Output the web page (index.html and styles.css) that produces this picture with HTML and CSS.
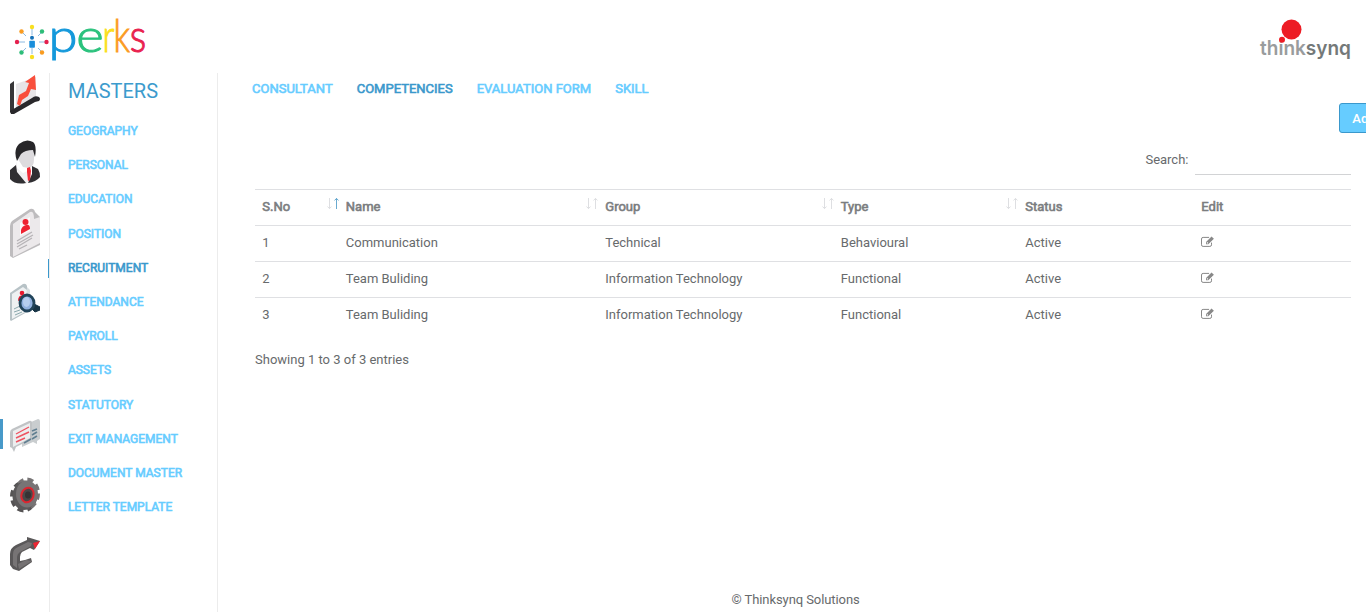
FILE: index.html
```html
<!DOCTYPE html>
<html lang="en">
<head>
<meta charset="utf-8">
<title>Masters - Competencies</title>
<link rel="stylesheet" href="styles.css">
</head>
<body>
<svg class="defs" width="0" height="0">
  <symbol id="edit" viewBox="0 0 13 11"><path d="M10.500 6.600v2.200a1.600 1.600 0 0 1-1.600 1.600H2.100A1.600 1.600 0 0 1 .5 8.800V3A1.600 1.600 0 0 1 2.100 1.400h6" fill="none" stroke="#888" stroke-width="1"/><path d="M5 8.200V6L10.500.4 12.900 2.700 7.300 8.200zM5.800 6.300V7.400H6.900L7.300 7 6.200 5.900z" fill="#888" fill-rule="evenodd"/></symbol>
  <symbol id="sort" viewBox="0 0 12 13"><path class="down" d="M2.500 1v10.500M.5 9.600 2.500 11.500l2-1.900"/><path class="up" d="M9.500 12V1.500M7.500 3.400l2-1.900 2 1.900"/></symbol>
</svg>
<header class="top">
  <svg class="logo" width="148" height="56" viewBox="0 10 148 56">
    <g stroke="#7fb2df" stroke-width=".9"><path d="M32 29v6M32 48v6M17 42h8M39 42h7M22 32l4 4M42 32l-4 4M22 52l4-4M42 52l-4-4"/></g>
    <circle cx="32" cy="27" r="2.200" fill="#f8df20"/><circle cx="42" cy="31.500" r="2.200" fill="#2dbd78"/><circle cx="46.500" cy="42" r="2.200" fill="#e5204e"/><circle cx="42" cy="52.500" r="2.200" fill="#f99b20"/><circle cx="32" cy="57" r="2.200" fill="#f8df20"/><circle cx="21.500" cy="52.500" r="2.200" fill="#2dbd78"/><circle cx="17" cy="42" r="2.200" fill="#e5204e"/><circle cx="21.500" cy="31.500" r="2.200" fill="#f99b20"/>
    <circle cx="32" cy="37.800" r="2" fill="#1672b8"/><rect x="29.300" y="40.800" width="5.600" height="7" rx=".8" fill="#198edb"/>
    <g class="perks">
      <text x="48.500" y="51.500" textLength="29" lengthAdjust="spacingAndGlyphs" fill="#1599db" stroke="#1599db">p</text>
      <text x="76.300" y="51.500" textLength="27.500" lengthAdjust="spacingAndGlyphs" fill="#2bc27d" stroke="#2bc27d">e</text>
      <text x="102.500" y="51.500" textLength="12" lengthAdjust="spacingAndGlyphs" fill="#fadf1c" stroke="#fadf1c">r</text>
      <text x="113.500" y="51.500" textLength="16.500" lengthAdjust="spacingAndGlyphs" fill="#fb9b22" stroke="#fb9b22">k</text>
      <text x="129.800" y="51.500" textLength="16.500" lengthAdjust="spacingAndGlyphs" fill="#e9224f" stroke="#e9224f">s</text>
    </g>
  </svg>
  <svg class="brand" width="94" height="48" viewBox="1258 15 94 48">
    <text class="syn" x="1260" y="54.500" textLength="91" lengthAdjust="spacingAndGlyphs"><tspan fill="#999c9d">think</tspan><tspan fill="#747979">synq</tspan></text>
    <circle cx="1291.500" cy="29.500" r="10" fill="#ed1c24"/><circle cx="1282" cy="39.800" r="3" fill="#ed1c24"/>
  </svg>
</header>
<div class="shell">
  <aside class="rail">
    <a class="r1"><svg width="30" height="41" viewBox="0 0 30 41"><path d="M6 9 26 2v21L6 34z" fill="#e7e5e7"/><path d="M0 9l4-3v28l-4 4z" fill="#373638"/><path d="M1 39 0 36l22-13q3-3 7-1 2 2 0 4l-4 1-21 12z" fill="#29282b"/><path d="M7 29 10 31 12 25 18 21 21 14 26 15 25 0 15 7l4 1-3 8-7 4z" fill="#f94f3c"/></svg></a>
    <a class="r2"><svg width="30" height="44" viewBox="0 0 30 44"><path d="M8 10h16v9q0 8-5 9l-6-1-5-8z" fill="#dddbde"/><path d="M7 21Q3 10 9 4q7-6 14-2 4 3 2 15l-2-7q-8 0-12 4z" fill="#272629"/><path d="M7 21v7l6 5 7-3 2 8-6 6-8-5-3-10z" fill="#f1f0f2"/><path d="M6 25 0 30v9q5 6 16 4L7 32zM22 26l6 3q2 3 2 8-4 5-12 6l4-9z" fill="#302f32"/><path d="M17 28l3-1 1 4-1 9-2 1-1-9z" fill="#f12a37"/></svg></a>
    <a class="r3"><svg width="30" height="50" viewBox="0 0 30 50"><path d="M2 13 20 1q4-1 5 3l5 5v28L3 50l-3-2V18q0-3 2-5z" fill="#bebcbe"/><path d="M3 16 20 4q4-2 4 7l6-2v26L3 49z" fill="#ece9eb"/><path d="M10 15 20 9v14L10 28z" fill="#fbf8f9"/><circle cx="15.500" cy="14" r="3" fill="#ee2231"/><path d="M11 26v-4q1-4 5-5 4-1 4 4z" fill="#ee2231"/><path d="M7 33l15-9M7 36l16-9M7 39l15-9M9 41l8-4" stroke="#b6b3b6" stroke-width="1.300"/></svg></a>
    <a class="r4"><svg width="30" height="38" viewBox="0 0 30 38"><path d="M0 10 13 1q3-1 4 2v26L1 38 0 37z" fill="#b7c2c6"/><path d="M2 11 13 4l4 3v21L2 36z" fill="#eef1f2"/><path d="M17 4l3 3v8h-4z" fill="#d9dfe1"/><circle cx="12" cy="10" r="2.300" fill="#e7182e"/><path d="M8 18q0-6 5-6 3 0 2 3z" fill="#e7182e"/><path d="M4 26l6-3M4 29l6-2M5 32l7-3" stroke="#8aa8ad"/><path d="M21 25l3-4 6 3v3l-5 2z" fill="#163344" stroke="#163344"/><ellipse cx="17" cy="20" rx="7" ry="8" fill="#91b1df" stroke="#21445a" stroke-width="2.800"/><ellipse cx="16.500" cy="19" rx="3.500" ry="5" fill="#b6ceef"/></svg></a>
    <a class="r5 on"><svg width="30" height="34" viewBox="0 0 30 34"><path d="M12 7 28 0q2 0 2 3v17l-3 2v3l-4-2-11 5z" fill="#c9cdcf"/><path d="M2 10 19 2q3-1 3 2v16L6 28l-2 5-2-4-2-1V14q0-3 2-4z" fill="#c0c3c5"/><path d="M3 12 20 4v15L3 28z" fill="#eceeef"/><path d="M6 15l13-7M6 19l13-6M6 23l9-4" stroke="#ee5361" stroke-width="1.400"/><path d="M22 12l5-2M22 16l5-3M22 20l5-3M14 24l7-4" stroke="#617f91" stroke-width="1.600"/></svg></a>
    <a class="r6"><svg width="30" height="36" viewBox="0 0 30 36"><g fill="none" stroke-width="4"><ellipse cx="13.500" cy="19.500" rx="11.500" ry="14" stroke="#555354" stroke-dasharray="6 4"/><ellipse cx="17" cy="16.500" rx="11" ry="14" stroke="#777475" stroke-dasharray="6 3.850"/></g><ellipse cx="14" cy="19" rx="11.500" ry="14" fill="#5b595a"/><ellipse cx="17" cy="17" rx="11" ry="13.500" fill="#777475"/><ellipse cx="17.500" cy="18" rx="6" ry="7.500" transform="rotate(20 17.500 18)" fill="#4a4748" stroke="#dc2630" stroke-width="2"/><ellipse cx="18" cy="18" rx="3" ry="3.500" fill="#353334"/></svg></a>
    <a class="r7"><svg width="30" height="34" viewBox="0 0 30 34"><path d="M0 17q0-6 6-9l11-5V0l13 4-6 9-4-2-8 4q-2 2-2 5v4l5-1 6-2 1 4L9 34 3 32 0 28z" fill="#5a5859"/><path d="M3 17q0-5 5-7l10-5 4 1-1 3-11 6q-3 2-3 6v10l-4-3z" fill="#777475"/><path d="M8 27l8-4 6 1-13 8z" fill="#757273"/><path d="M23 6l7-2-5 8z" fill="#ec2633"/></svg></a>
  </aside>
  <nav class="side">
    <h1>MASTERS</h1>
    <a>GEOGRAPHY</a><a>PERSONAL</a><a>EDUCATION</a><a>POSITION</a><a class="active">RECRUITMENT</a><a>ATTENDANCE</a><a>PAYROLL</a><a>ASSETS</a><a>STATUTORY</a><a>EXIT MANAGEMENT</a><a>DOCUMENT MASTER</a><a>LETTER TEMPLATE</a>
  </nav>
  <main>
    <nav class="tabs"><a>CONSULTANT</a><a class="active">COMPETENCIES</a><a>EVALUATION FORM</a><a>SKILL</a></nav>
    <div class="actions"><button>Add</button></div>
    <label class="search">Search:<input type="text"></label>
    <table>
      <colgroup><col class="c1"><col class="c2"><col class="c3"><col class="c4"><col class="c5"><col></colgroup>
      <thead><tr>
        <th><span>S.No<svg class="sort asc"><use href="#sort"/></svg></span></th>
        <th><span>Name<svg class="sort"><use href="#sort"/></svg></span></th>
        <th><span>Group<svg class="sort"><use href="#sort"/></svg></span></th>
        <th><span>Type<svg class="sort"><use href="#sort"/></svg></span></th>
        <th>Status</th><th>Edit</th>
      </tr></thead>
      <tbody>
        <tr><td>1</td><td>Communication</td><td>Technical</td><td>Behavioural</td><td>Active</td><td><svg class="edit"><use href="#edit"/></svg></td></tr>
        <tr><td>2</td><td>Team Buliding</td><td>Information Technology</td><td>Functional</td><td>Active</td><td><svg class="edit"><use href="#edit"/></svg></td></tr>
        <tr><td>3</td><td>Team Buliding</td><td>Information Technology</td><td>Functional</td><td>Active</td><td><svg class="edit"><use href="#edit"/></svg></td></tr>
      </tbody>
    </table>
    <p class="info">Showing 1 to 3 of 3 entries</p>
    <footer>© Thinksynq Solutions</footer>
  </main>
</div>
</body>
</html>
```
FILE: styles.css
```css
* { box-sizing: border-box; }
html, body { margin: 0; height: 612px; overflow: hidden; }
body { font: 13px/20px Roboto, sans-serif; color: #676a6c; background: #fff; }
.defs { display: block; }
.top { height: 73px; display: flex; justify-content: space-between; padding: 10px 14px 0 0; }
.logo { display: block; overflow: visible; }
.brand { display: block; margin-top: 5px; overflow: visible; }
.perks { font: 300 45px Lato, sans-serif; stroke-width: 1px; }
.syn { font: 600 20px Inter, sans-serif; }
.shell { display: flex; height: 539px; }
.rail { width: 50px; border-right: 1px solid #ececec; }
.rail a { display: block; padding-left: 10px; }
.rail svg { display: block; }
.r1 { padding-top: 2px; }
.r2 { padding-top: 24px; }
.r3 { padding-top: 24px; }
.r4 { padding-top: 25px; }
.r5 { margin-top: 98px; }
.r5.on { background: linear-gradient(#4799c9, #4799c9) 0 0 / 3px 30px no-repeat; }
.r6 { padding-top: 24px; }
.r7 { padding-top: 24px; }
.side { width: 168px; border-right: 1px solid #ececec; }
.side h1 { margin: 0; padding: 6px 0 0 18px; height: 41px; font: 400 20px/24px Roboto, sans-serif; color: #3c9bcd; }
.side a { display: block; height: 34.200px; padding-left: 17.900px; font-size: 12px; line-height: 34px; }
.side a, .tabs a { color: #66ccff; -webkit-text-stroke: .6px currentColor; }
.side a.active, .tabs a.active { color: #3a98cc; }
.side a.active { background: linear-gradient(#3a98cc, #3a98cc) 0 8px / 1px 19px no-repeat; margin-left: -2px; padding-left: 19.900px; }
main { flex: 1; min-width: 0; display: flex; flex-direction: column; padding: 0 15px 0 37px; }
.tabs { display: flex; gap: 24px; height: 30px; margin-left: -3px; padding-top: 6px; font-size: 13px; }
.actions { height: 42px; display: flex; justify-content: flex-end; margin-right: -38px; }
button { width: 50px; height: 30px; padding: 0; font: 500 13px Roboto, sans-serif; color: #fff; background: #66ccff; border: 1px solid #3a98cc; border-radius: 3px; }
.search { display: flex; justify-content: flex-end; gap: 6.500px; height: 44px; line-height: 29px; }
.search input { width: 156px; height: 30px; border: 0; border-bottom: 1px solid #d2d3d5; background: none; }
table { width: 1096px; table-layout: fixed; border-collapse: collapse; }
.c1 { width: 83.500px; }
.c2 { width: 259.500px; }
.c3 { width: 235.500px; }
.c4 { width: 184.500px; }
.c5 { width: 176px; }
th, td { height: 36px; padding: 0 0 1px 7.300px; text-align: left; border-top: 1px solid #dfe0e3; }
th { font-weight: 400; color: #7b7d7f; -webkit-text-stroke: .6px currentColor; }
th span { display: flex; justify-content: space-between; }
.sort { width: 12px; height: 13px; fill: none; stroke: #d5d7da; stroke-width: .8; }
.asc { --up: #4294c4; }
.up { stroke: var(--up, #d5d7da); }
.edit { display: block; width: 13px; height: 11px; margin-bottom: 3px; }
.info { margin: 16px 0 0; }
footer { margin-top: auto; height: 22px; padding-left: 476.500px; letter-spacing: -.08px; }
```
